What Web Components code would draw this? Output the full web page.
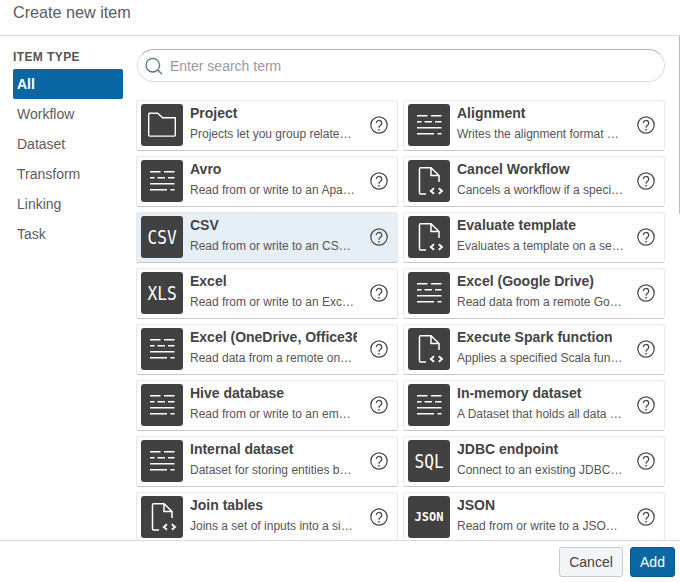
<!DOCTYPE html>
<html>
<head>
<meta charset="utf-8">
<title>Create new item</title>
<style>
    html, body { margin: 0; height: 100%; background: #fff; overflow: hidden; }
    body { font-family: "Liberation Sans", Arial, sans-serif; color: #444; }
</style>
</head>
<body>
<item-dialog>
    <span slot="title">Create new item</span>
    <type-sidebar slot="side"></type-sidebar>
    <search-box slot="search" placeholder="Enter search term"></search-box>
    <item-list slot="list"></item-list>
    <dialog-button slot="actions">Cancel</dialog-button>
    <dialog-button slot="actions" primary>Add</dialog-button>
</item-dialog>

<script>
class ItemDialog extends HTMLElement {
    constructor(){
        super();
        this.attachShadow({mode: 'open'});
        this.shadowRoot.innerHTML = `
            <style>
                :host {
                    display: flex;
                    flex-direction: column;
                    width: 680px;
                    height: 582px;
                    position: relative;
                }
                header {
                    padding: 4px 13px 0;
                    box-sizing: border-box;
                    border-bottom: 1px solid #dcdcdc;
                    height: 36px;
                    font-size: 16.2px;
                    line-height: 17px;
                    color: #5b5b5b;
                    flex: none;
                }
                #body {
                    flex: 1;
                    display: flex;
                    min-height: 0;
                    overflow: hidden;
                }
                #side {
                    width: 136px;
                    flex: none;
                    padding: 15px 13px 0;
                    box-sizing: border-box;
                }
                #main {
                    flex: 1;
                    min-width: 0;
                    padding: 13px 14px 0 0;
                }
                #search { display: block; margin-bottom: 18px; }
                #thumb {
                    position: absolute;
                    top: 36px;
                    right: 0;
                    width: 1px;
                    height: 178px;
                    background: #b9b9b9;
                }
                footer {
                    flex: none;
                    height: 42px;
                    box-sizing: border-box;
                    border-top: 1px solid #dcdcdc;
                    padding: 6px 5px 0 0;
                    display: flex;
                    justify-content: flex-end;
                    gap: 7px;
                }
            </style>
            <header><slot name="title"></slot></header>
            <div id="body">
                <div id="side"><slot name="side"></slot></div>
                <div id="main">
                    <div id="search"><slot name="search"></slot></div>
                    <slot name="list"></slot>
                </div>
            </div>
            <div id="thumb"></div>
            <footer><slot name="actions"></slot></footer>
        `;
    }
}

class TypeSidebar extends HTMLElement {
    constructor(){
        super();
        this.attachShadow({mode: 'open'});
        const types = ['All', 'Workflow', 'Dataset', 'Transform', 'Linking', 'Task'];
        this.shadowRoot.innerHTML = `
            <style>
                :host { display: block; }
                h2 {
                    margin: 0;
                    font-size: 12px;
                    line-height: 13px;
                    height: 18px;
                    font-weight: 700;
                    letter-spacing: 0.4px;
                    color: #555;
                }
                div {
                    height: 30px;
                    line-height: 30px;
                    padding-left: 4px;
                    font-size: 14px;
                    color: #5c5c5c;
                }
                div.active {
                    background: #0a67a3;
                    color: #fff;
                    font-weight: 700;
                    border-radius: 2px;
                }
            </style>
            <h2>ITEM TYPE</h2>
            ${types.map((t, i) => `<div class="${i === 0 ? 'active' : ''}">${t}</div>`).join('')}
        `;
    }
}

class SearchBox extends HTMLElement {
    connectedCallback(){
        if (this.shadowRoot) return;
        this.attachShadow({mode: 'open'});
        this.shadowRoot.innerHTML = `
            <style>
                :host {
                    display: flex;
                    align-items: center;
                    height: 33px;
                    margin-left: 1px;
                    margin-right: 1px;
                    box-sizing: border-box;
                    border: 1px solid #dcdcdc;
                    border-top-color: #b4b4b4;
                    border-radius: 17px;
                    padding-left: 7px;
                    gap: 5px;
                }
                svg { flex: none; }
                span { font-size: 14px; color: #9a9a9a; }
            </style>
            <svg width="20" height="20" viewBox="0 0 20 20" fill="none" stroke="#5a7282" stroke-width="1.3">
                <circle cx="7.800" cy="9.200" r="6.800"/>
                <path d="M12.800 14L17 18.200"/>
            </svg>
            <span>${this.getAttribute('placeholder')}</span>
        `;
    }
}

const FOLDER = `<svg width="42" height="42" viewBox="0 0 42 42" fill="none" stroke="#fff" stroke-width="1.4"><path d="M7.700 10a.8.8 0 0 1 .8-.8H16.700L21.700 13.700H34.300V31.300a.8.8 0 0 1-.8.8H8.500a.8.8 0 0 1-.8-.8z"/></svg>`;
const LINES = `<svg width="42" height="42" viewBox="0 0 42 42" fill="#fff"><path d="M9 11h10.500v1.600H9zM23 11h10.500v1.600H23zM9 17h4.500v1.600H9zM16.500 17h7.500v1.600h-7.500zM27 17h6.500v1.600H27zM9 23h24.500v1.600H9zM9 29h17v1.600H9zM29.500 29h4v1.600h-4z"/></svg>`;
const FILE_CODE = `<svg width="42" height="42" viewBox="0 0 42 42" fill="none" stroke="#fff" stroke-width="1.500"><path d="M18 34H12.500a1 1 0 0 1-1-1V8.700a1 1 0 0 1 1-1H23L31 15.500V22M23 7.700V15.500H31"/><path d="M26 28.300L22.800 31L26 33.700M30.800 28.300L34 31L30.800 33.700" stroke-width="1.800"/></svg>`;

class ItemIcon extends HTMLElement {
    connectedCallback(){
        if (this.shadowRoot) return;
        this.attachShadow({mode: 'open'});
        const kind = this.getAttribute('kind');
        const svgs = {folder: FOLDER, lines: LINES, file: FILE_CODE};
        const content = svgs[kind] || `<span class="${kind.length > 3 ? 'small' : ''}">${kind}</span>`;
        this.shadowRoot.innerHTML = `
            <style>
                :host {
                    display: flex;
                    flex: none;
                    align-items: center;
                    justify-content: center;
                    width: 42px;
                    height: 42px;
                    background: #414141;
                    border-radius: 3px;
                    color: #fff;
                    overflow: hidden;
                }
                span {
                    font-family: "DejaVu Sans Mono", "Liberation Mono", monospace;
                    font-size: 19px;
                    letter-spacing: 0;
                    transform: scaleX(0.85);
                }
                span.small { font-size: 12px; font-weight: 700; transform: none; }
            </style>
            ${content}
        `;
    }
}

class ItemCard extends HTMLElement {
    connectedCallback(){
        if (this.shadowRoot) return;
        this.attachShadow({mode: 'open'});
        this.shadowRoot.innerHTML = `
            <style>
                :host {
                    display: flex;
                    align-items: center;
                    height: 51px;
                    box-sizing: border-box;
                    padding: 0 9px 1px 4px;
                    background: #fff;
                    border: 1px solid #e8e8e8;
                    border-bottom-color: #c6c6c6;
                    border-radius: 3px;
                    min-width: 0;
                }
                :host([selected]) { background: #e6eff6; }
                #text {
                    flex: 1;
                    min-width: 0;
                    align-self: flex-start;
                    margin: 3px 13px 0 7px;
                }
                #title {
                    font-size: 14px;
                    line-height: 18px;
                    font-weight: 700;
                    color: #444;
                    white-space: nowrap;
                    overflow: hidden;
                }
                #desc {
                    font-size: 12px;
                    line-height: 14px;
                    margin-top: 5px;
                    color: #555;
                    white-space: nowrap;
                    overflow: hidden;
                    text-overflow: ellipsis;
                }
                svg { flex: none; }
            </style>
            <item-icon kind="${this.getAttribute('icon')}"></item-icon>
            <div id="text">
                <div id="title">${this.getAttribute('name')}</div>
                <div id="desc">${this.getAttribute('desc')}</div>
            </div>
            <svg width="18" height="18" viewBox="0 0 18 18" fill="none" stroke="#444">
                <circle cx="9" cy="9" r="8.200" stroke-width="1.200"/>
                <path d="M6.300 7a2.700 2.700 0 1 1 4.200 2.300c-1 .6-1.500 1.200-1.500 2.400" stroke-width="1.300"/>
                <circle cx="9" cy="13.800" r=".9" fill="#444" stroke="none"/>
            </svg>
        `;
    }
}

class ItemList extends HTMLElement {
    connectedCallback(){
        if (this.shadowRoot) return;
        this.attachShadow({mode: 'open'});
        const items = [
            ['folder', 'Project', 'Projects let you group related items and share them'],
            ['lines', 'Alignment', 'Writes the alignment format specified by the link spec'],
            ['lines', 'Avro', 'Read from or write to an Apache Avro file'],
            ['file', 'Cancel Workflow', 'Cancels a workflow if a specified condition holds'],
            ['CSV', 'CSV', 'Read from or write to an CSV file'],
            ['file', 'Evaluate template', 'Evaluates a template on a sequence of entities'],
            ['XLS', 'Excel', 'Read from or write to an Excel workbook'],
            ['lines', 'Excel (Google Drive)', 'Read data from a remote Google Sheets file'],
            ['lines', 'Excel (OneDrive, Office365)', 'Read data from a remote onedrive or Office365 file'],
            ['file', 'Execute Spark function', 'Applies a specified Scala function to a column'],
            ['lines', 'Hive database', 'Read from or write to an embedded Apache Hive'],
            ['lines', 'In-memory dataset', 'A Dataset that holds all data in-memory'],
            ['lines', 'Internal dataset', 'Dataset for storing entities between workflow steps'],
            ['SQL', 'JDBC endpoint', 'Connect to an existing JDBC endpoint'],
            ['file', 'Join tables', 'Joins a set of inputs into a single table'],
            ['JSON', 'JSON', 'Read from or write to a JSON file']
        ];
        this.shadowRoot.innerHTML = `
            <style>
                :host {
                    display: grid;
                    grid-template-columns: 262px 262px;
                    gap: 5px 5px;
                }
            </style>
        `;
        items.forEach(([icon, name, desc]) => {
            const card = document.createElement('item-card');
            card.setAttribute('icon', icon);
            card.setAttribute('name', name);
            card.setAttribute('desc', desc);
            if (name === 'CSV') card.setAttribute('selected', '');
            this.shadowRoot.appendChild(card);
        });
    }
}

class DialogButton extends HTMLElement {
    constructor(){
        super();
        this.attachShadow({mode: 'open'});
        this.shadowRoot.innerHTML = `
            <style>
                :host {
                    display: flex;
                    align-items: center;
                    justify-content: center;
                    height: 30px;
                    width: 64px;
                    box-sizing: border-box;
                    border: 1px solid #c9c9c9;
                    border-radius: 3px;
                    background: #f3f6f8;
                    color: #444;
                    font-size: 14px;
                }
                :host([primary]) {
                    width: 45px;
                    background: #0a67a3;
                    border-color: #0a5a90;
                    color: #fff;
                }
            </style>
            <slot></slot>
        `;
    }
}

customElements.define('item-icon', ItemIcon);
customElements.define('item-card', ItemCard);
customElements.define('item-list', ItemList);
customElements.define('type-sidebar', TypeSidebar);
customElements.define('search-box', SearchBox);
customElements.define('dialog-button', DialogButton);
customElements.define('item-dialog', ItemDialog);
</script>
</body>
</html>
